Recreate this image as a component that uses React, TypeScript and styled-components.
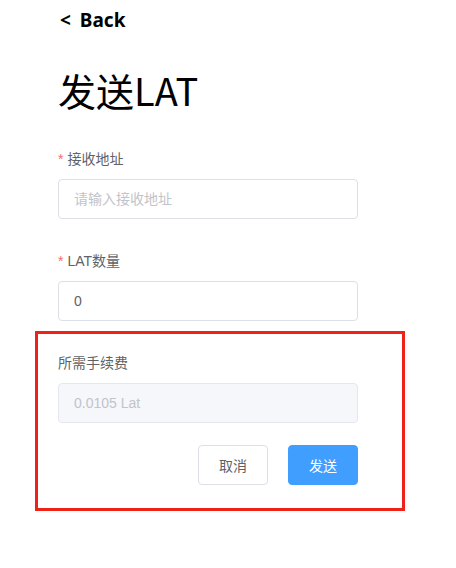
import React from 'react'
import styled, { createGlobalStyle } from 'styled-components'

const GlobalStyle = createGlobalStyle`
  html, body {
    margin: 0;
    padding: 0;
    background: #ffffff;
  }
  * {
    box-sizing: border-box;
  }
`

const StyledPage = styled.div`
  width: 456px;
  min-height: 568px;
  padding-left: 58px;
  font-family: "Liberation Sans", "Noto Sans CJK SC", sans-serif;
`

const StyledContent = styled.div`
  width: 300px;
  display: flex;
  flex-direction: column;
`

const StyledBack = styled.div`
  height: 40px;
  line-height: 40px;
  padding-left: 2px;
  font-family: "Noto Sans", "Noto Sans CJK SC", sans-serif;
  font-size: 19px;
  font-weight: 700;
  word-spacing: 4px;
  color: #000000;
  cursor: pointer;
`

const StyledTitle = styled.h1`
  margin: 20px 0 19px;
  height: 60px;
  line-height: 60px;
  font-family: "Noto Sans CJK SC", sans-serif;
  font-size: 38px;
  font-weight: 400;
  color: #000000;
`

interface FormItemProps {
  spacing?: number;
}

const StyledFormItem = styled.div<FormItemProps>`
  display: flex;
  flex-direction: column;
  margin-bottom: ${props => (props.spacing ?? 22)}px;
`

interface LabelProps {
  required?: boolean;
}

const StyledLabel = styled.label<LabelProps>`
  height: 40px;
  line-height: 40px;
  font-size: 14px;
  color: #606266;

  &:before {
    content: ${props => (props.required ? '"*"' : 'none')};
    color: #f56c6c;
    margin-right: 4px;
  }
`

const StyledInput = styled.input`
  width: 300px;
  height: 40px;
  padding: 0 15px;
  border: 1px solid #dcdfe6;
  border-radius: 4px;
  background: #ffffff;
  font-family: "Liberation Sans", "Noto Sans CJK SC", sans-serif;
  font-size: 14px;
  color: #606266;
  outline: none;

  &::placeholder {
    color: #c0c4cc;
  }

  &:disabled {
    background: #f5f7fa;
    border-color: #e4e7ed;
    color: #c0c4cc;
  }
`

const StyledHighlight = styled.div`
  margin-left: -23px;
  width: 370px;
  padding: 9px 44px 23px 20px;
  border: 3px solid #f02218;
`

const StyledActions = styled.div`
  display: flex;
  justify-content: flex-end;
  gap: 20px;
`

interface ButtonProps {
  primary?: boolean;
}

const StyledButton = styled.button<ButtonProps>`
  width: 70px;
  height: 40px;
  border-radius: 4px;
  border: 1px solid ${props => (props.primary ? '#409eff' : '#dcdfe6')};
  background: ${props => (props.primary ? '#409eff' : '#ffffff')};
  color: ${props => (props.primary ? '#ffffff' : '#606266')};
  font-family: "Liberation Sans", "Noto Sans CJK SC", sans-serif;
  font-size: 14px;
  cursor: pointer;
`

const App = () => {
  const [address, setAddress] = React.useState('')
  const [amount, setAmount] = React.useState('0')

  return (
    <StyledPage>
      <GlobalStyle />
      <StyledContent>
        <StyledBack>&lt; Back</StyledBack>
        <StyledTitle>发送LAT</StyledTitle>

        <StyledFormItem>
          <StyledLabel required>接收地址</StyledLabel>
          <StyledInput
            placeholder="请输入接收地址"
            value={address}
            onChange={(e) => setAddress(e.target.value)}
          />
        </StyledFormItem>

        <StyledFormItem spacing={10}>
          <StyledLabel required>LAT数量</StyledLabel>
          <StyledInput
            value={amount}
            onChange={(e) => setAmount(e.target.value)}
          />
        </StyledFormItem>

        <StyledHighlight>
          <StyledFormItem>
            <StyledLabel>所需手续费</StyledLabel>
            <StyledInput disabled value="0.0105 Lat" />
          </StyledFormItem>
          <StyledActions>
            <StyledButton>取消</StyledButton>
            <StyledButton primary>发送</StyledButton>
          </StyledActions>
        </StyledHighlight>
      </StyledContent>
    </StyledPage>
  )
}

export default App
